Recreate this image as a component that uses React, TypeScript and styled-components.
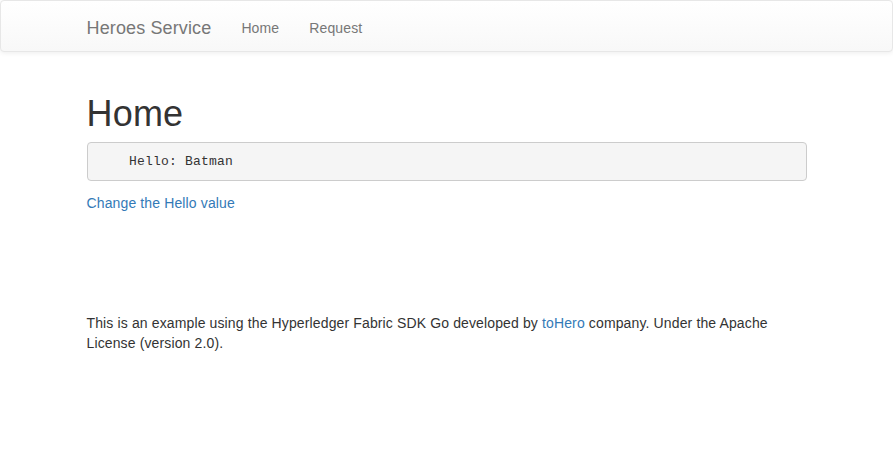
import styled, { createGlobalStyle } from 'styled-components';

const GlobalStyle = createGlobalStyle`
  html, body {
    margin: 0;
    padding: 0;
    background: #fff;
  }
  body {
    font-family: "Liberation Sans", Arial, Helvetica, sans-serif;
    font-size: 14px;
    line-height: 1.42857143;
    letter-spacing: 0.13px;
    color: #333;
  }
  * {
    box-sizing: border-box;
  }
`;

const App = () => {
  return (
    <>
      <GlobalStyle />
      <Navbar>
        <Container>
          <Brand href="#">Heroes Service</Brand>
          <NavList>
            <li>
              <NavLink href="#">Home</NavLink>
            </li>
            <li>
              <NavLink href="#">Request</NavLink>
            </li>
          </NavList>
        </Container>
      </Navbar>
      <Main>
        <Title>Home</Title>
        <Pre>{'    Hello: Batman'}</Pre>
        <Paragraph>
          <Link href="#">Change the Hello value</Link>
        </Paragraph>
        <Footer>
          This is an example using the Hyperledger Fabric SDK Go developed by{' '}
          <Link href="#">toHero</Link> company. Under the Apache License
          (version 2.0).
        </Footer>
      </Main>
    </>
  );
};

export default App;

const Navbar = styled.nav`
  min-height: 50px;
  margin-bottom: 20px;
  border: 1px solid #e7e7e7;
  border-radius: 4px;
  background-color: #f8f8f8;
  background-image: linear-gradient(to bottom, #fff 0, #f8f8f8 100%);
  box-shadow:
    inset 0 1px 0 rgba(255, 255, 255, 0.15),
    0 1px 5px rgba(0, 0, 0, 0.075);
`;

const Container = styled.div`
  width: 750px;
  margin: 0 auto;
  padding: 0 15px;
  display: flex;
  align-items: center;
`;

const Brand = styled.a`
  display: block;
  height: 50px;
  padding: 17px 15px 13px;
  margin-left: -15px;
  font-size: 18px;
  line-height: 20px;
  color: #777;
  text-decoration: none;
  text-shadow: 0 1px 0 rgba(255, 255, 255, 0.25);
`;

const NavList = styled.ul`
  display: flex;
  list-style: none;
  margin: 0;
  padding: 0;
`;

const NavLink = styled.a`
  display: block;
  padding: 17px 15px 13px;
  line-height: 20px;
  color: #777;
  text-decoration: none;
  text-shadow: 0 1px 0 rgba(255, 255, 255, 0.25);
`;

const Main = styled.div`
  width: 750px;
  margin: 0 auto;
  padding: 20px 15px 0;
`;

const Title = styled.h1`
  margin: 0 0 8px;
  padding-top: 2px;
  font-size: 36px;
  font-weight: 500;
  line-height: 1.1;
  letter-spacing: 0.2px;
  color: #333;
`;

const Pre = styled.pre`
  margin: 0 0 10px;
  padding: 10.5px 9.5px 8.5px;
  font-family: "Liberation Mono", "Courier New", monospace;
  font-size: 13px;
  line-height: 1.42857143;
  letter-spacing: 0.2px;
  color: #333;
  background-color: #f5f5f5;
  border: 1px solid #ccc;
  border-radius: 4px;
  white-space: pre-wrap;
`;

const Paragraph = styled.p`
  margin: 0 0 8px;
  padding-top: 2px;
`;

const Link = styled.a`
  color: #337ab7;
  text-decoration: none;
`;

const Footer = styled.p`
  margin: 98px 0 10px;
  padding-top: 2px;
`;
